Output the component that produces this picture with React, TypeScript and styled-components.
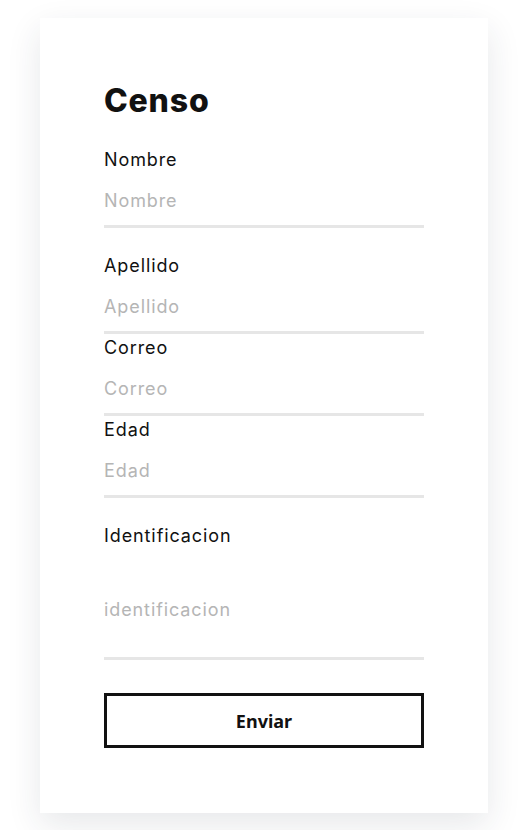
import styled, { createGlobalStyle } from 'styled-components';

const GlobalStyle = createGlobalStyle`
  body {
    margin: 0;
    background: #ffffff;
    font-family: Inter, "Noto Sans", sans-serif;
    color: #111111;
  }
  * {
    box-sizing: border-box;
  }
`;

const fields = [
  { label: 'Nombre', placeholder: 'Nombre', space: 26 },
  { label: 'Apellido', placeholder: 'Apellido', space: 2 },
  { label: 'Correo', placeholder: 'Correo', space: 2 },
  { label: 'Edad', placeholder: 'Edad', space: 26 },
];

export default function App() {
  return (
    <>
      <GlobalStyle />
      <Page>
        <Card>
          <Title>Censo</Title>
          <Form onSubmit={(e) => e.preventDefault()}>
            {fields.map((f) => (
              <Field key={f.label} $space={f.space}>
                <Label>{f.label}</Label>
                <Input placeholder={f.placeholder} />
              </Field>
            ))}
            <Field $space={0}>
              <Label>Identificacion</Label>
              <Input placeholder="identificacion" $tall />
            </Field>
            <Submit type="submit">Enviar</Submit>
          </Form>
        </Card>
      </Page>
    </>
  );
}

const Page = styled.div`
  display: flex;
  justify-content: center;
  padding: 18px 0 40px 2px;
`;

const Card = styled.div`
  width: 448px;
  background: #ffffff;
  padding: 64px 64px 65px;
  box-shadow: 0 12px 32px rgba(40, 50, 60, 0.11);
`;

const Title = styled.h1`
  margin: 0 0 28px;
  font-size: 32px;
  line-height: 38px;
  font-weight: 800;
  letter-spacing: 0.8px;
  color: #111111;
`;

const Form = styled.form`
  display: flex;
  flex-direction: column;
`;

const Field = styled.div<{ $space: number }>`
  display: flex;
  flex-direction: column;
  margin-bottom: ${(p) => p.$space}px;
`;

const Label = styled.label`
  font-size: 18px;
  line-height: 24px;
  font-weight: 400;
  letter-spacing: 0.9px;
  color: #111111;
`;

const Input = styled.input<{ $tall?: boolean }>`
  margin-top: 4px;
  width: 100%;
  border: none;
  border-bottom: 3px solid #e6e6e6;
  outline: none;
  background: transparent;
  font-family: Inter, "Noto Sans", sans-serif;
  font-size: 18px;
  line-height: 24px;
  letter-spacing: 0.9px;
  height: ${(p) => (p.$tall ? 108 : 52)}px;
  padding: ${(p) => (p.$tall ? '45px 0 36px' : '12px 0 13px')};
  color: #111111;

  &::placeholder {
    color: #b5b5b5;
  }
`;

const Submit = styled.button`
  margin-top: 33px;
  height: 55px;
  width: 100%;
  background: #ffffff;
  border: 3px solid #111111;
  border-radius: 0;
  font-family: "Noto Sans", "Open Sans", sans-serif;
  font-size: 18px;
  font-weight: 700;
  color: #111111;
  cursor: pointer;
`;
